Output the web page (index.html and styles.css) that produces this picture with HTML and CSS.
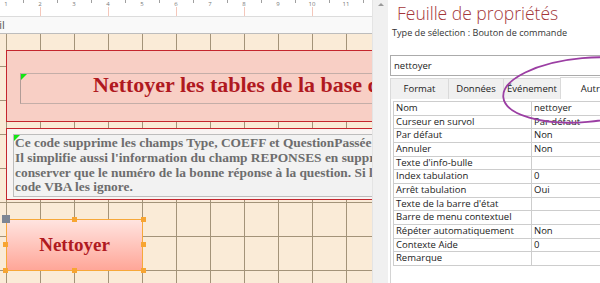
FILE: index.html
```html
<!DOCTYPE html>
<html lang="fr">
<head>
<meta charset="UTF-8">
<meta name="viewport" content="width=device-width, initial-scale=1.0">
<title>Formulaire - Mode Création</title>
<link rel="stylesheet" href="styles.css">
</head>
<body>

<div class="designer">
    <div class="ruler">
        <div class="ruler-marks">
            <span>1</span><span class="major">2</span><span>3</span><span class="major">4</span><span>5</span><span class="major">6</span><span>7</span><span class="major">8</span><span>9</span><span class="major">10</span><span>11</span>
        </div>
    </div>
    <div class="section-bar"><span>Détail</span></div>
    <div class="canvas">
        <div class="title-box">
            <div class="title-label"><i class="corner"></i>Nettoyer les tables de la base de données</div>
        </div>
        <div class="note-box">
            <div class="note-label"><i class="corner"></i>Ce code supprime les champs Type, COEFF et QuestionPassée<br>Il simplifie aussi l'information du champ REPONSES en supprimant le texte pour ne<br>conserver que le numéro de la bonne réponse à la question. Si les champs manquent, le<br>code VBA les ignore.</div>
        </div>
        <div class="button-ctrl">
            Nettoyer
            <i class="grip"></i>
            <i class="handle h-tc"></i>
            <i class="handle h-tr"></i>
            <i class="handle h-ml"></i>
            <i class="handle h-mr"></i>
            <i class="handle h-bl"></i>
            <i class="handle h-bc"></i>
            <i class="handle h-br"></i>
        </div>
    </div>
</div>

<div class="scrollbar"><span class="arrow"></span></div>

<div class="panel">
    <h1 class="panel-title">Feuille de propriétés</h1>
    <div class="selection-type">Type de sélection : Bouton de commande</div>
    <div class="combo">nettoyer</div>
    <div class="tabs">
        <span class="tab tab-format">Format</span>
        <span class="tab tab-data">Données</span>
        <span class="tab tab-event">Événement</span>
        <span class="tab tab-other active">Autre</span>
    </div>
    <div class="sheet">
        <div class="props">
            <div class="k">Nom</div><div class="v">nettoyer</div>
            <div class="k">Curseur en survol</div><div class="v">Par défaut</div>
            <div class="k">Par défaut</div><div class="v">Non</div>
            <div class="k">Annuler</div><div class="v">Non</div>
            <div class="k">Texte d'info-bulle</div><div class="v"></div>
            <div class="k">Index tabulation</div><div class="v">0</div>
            <div class="k">Arrêt tabulation</div><div class="v">Oui</div>
            <div class="k">Texte de la barre d'état</div><div class="v"></div>
            <div class="k">Barre de menu contextuel</div><div class="v"></div>
            <div class="k">Répéter automatiquement</div><div class="v">Non</div>
            <div class="k">Contexte Aide</div><div class="v">0</div>
            <div class="k">Remarque</div><div class="v"></div>
        </div>
    </div>
    <svg class="callout" width="110" height="90" viewBox="0 0 110 90">
        <ellipse cx="85" cy="40" rx="82" ry="32" transform="rotate(-5 85 40)" fill="none" stroke="#9b3ea3" stroke-width="1.8"/>
    </svg>
</div>

</body>
</html>
```

FILE: styles.css
```css
* {
    box-sizing: border-box;
}
body {
    margin: 0;
    width: 600px;
    height: 283px;
    overflow: hidden;
    display: flex;
    background: #fff;
    font-family: "Open Sans", "Noto Sans", sans-serif;
}

/* form designer */
.designer {
    width: 372px;
    flex: none;
    display: flex;
    flex-direction: column;
    overflow: hidden;
}
.ruler {
    height: 17px;
    flex: none;
    border-bottom: 1px solid #dcdcdc;
    background-color: #fff;
    background-image: linear-gradient(90deg, #a0a0a0 1px, transparent 1px);
    background-size: 34px 3px;
    background-position: 23px 0;
    background-repeat: repeat-x;
    overflow: hidden;
}
.ruler-marks {
    display: flex;
    margin-left: -11px;
}
.ruler-marks span {
    flex: none;
    width: 34px;
    height: 16px;
    padding-top: 1px;
    text-align: center;
    font-size: 6px;
    line-height: 7px;
    color: #777;
}
.ruler-marks .major {
    background: linear-gradient(#f4c7bb, #f4c7bb) no-repeat 17px 7px / 1px 9px;
}
.section-bar {
    height: 17px;
    flex: none;
    background: #f9f9f9;
    border-bottom: 1px solid #bdbdbd;
    font-size: 11px;
    line-height: 16px;
    color: #555;
    white-space: nowrap;
    overflow: hidden;
}
.section-bar span {
    margin-left: -25px;
}
.canvas {
    flex: 1;
    padding-top: 16px;
    background-color: #faebd7;
    background-image:
        linear-gradient(90deg, #a39379 1px, transparent 1px),
        linear-gradient(#a39379 1px, transparent 1px);
    background-size: 34px 34px;
    background-position: 6px 0, 0 32px;
}
.title-box {
    margin-left: 6px;
    width: 380px;
    height: 72px;
    padding: 22px 0 0 13px;
    border: 1px solid #c4262e;
    background: #f8cfc5;
}
.title-label {
    position: relative;
    height: 31px;
    padding-left: 72px;
    border: 1px solid #c4aea8;
    border-left-color: #b19c97;
    font-family: "Liberation Serif", serif;
    font-weight: bold;
    font-size: 22px;
    line-height: 22px;
    color: #b0191f;
    white-space: nowrap;
    overflow: hidden;
}
.corner {
    position: absolute;
    left: 0;
    top: 0;
    width: 0;
    height: 0;
    border-top: 6px solid #14e614;
    border-right: 6px solid transparent;
}
.note-box {
    margin: 6px 0 0 6px;
    width: 380px;
    height: 72px;
    padding: 5px 0 0 6px;
    border: 1px solid #c4262e;
    background: #f8f4f3;
}
.note-label {
    position: relative;
    height: 63px;
    padding: 1px 0 0 1px;
    border: 1px solid #bdbdbd;
    background: #f2f2f2;
    font-family: "Liberation Serif", serif;
    font-weight: bold;
    font-size: 13.4px;
    line-height: 14.8px;
    color: #6d6d6d;
    white-space: nowrap;
    overflow: hidden;
}
.button-ctrl {
    position: relative;
    margin: 19px 0 0 6px;
    width: 137px;
    height: 52px;
    display: flex;
    align-items: center;
    justify-content: center;
    border: 1px solid #f6a83a;
    background: linear-gradient(#ffe4e0, #ffa698);
    font-family: "Liberation Serif", serif;
    font-weight: bold;
    font-size: 19px;
    color: #b01a21;
}
.grip {
    position: absolute;
    left: -5px;
    top: -5px;
    width: 8px;
    height: 8px;
    background: #7d8694;
}
.handle {
    position: absolute;
    width: 5px;
    height: 5px;
    background: #f7a532;
}
.h-tc { left: 65px; top: -3px; }
.h-tr { right: -4px; top: -3px; }
.h-ml { left: -4px; top: 22px; }
.h-mr { right: -4px; top: 22px; }
.h-bl { left: -4px; bottom: -3px; }
.h-bc { left: 65px; bottom: -3px; }
.h-br { right: -4px; bottom: -3px; }

.scrollbar {
    width: 16px;
    flex: none;
    padding: 3px 0 0 5px;
    background: #f0f0f0;
    border-left: 1px solid #e4e4e4;
}
.arrow {
    display: block;
    width: 0;
    height: 0;
    border-left: 3px solid transparent;
    border-right: 3px solid transparent;
    border-bottom: 3px solid #9a9a9a;
}

/* property sheet */
.panel {
    position: relative;
    flex: 1;
    display: flex;
    flex-direction: column;
    overflow: hidden;
    white-space: nowrap;
    color: #1a1a1a;
}
.panel-title {
    margin: 0;
    height: 24px;
    padding: 2px 0 0 9px;
    font-weight: 300;
    font-size: 17.5px;
    line-height: 22px;
    color: #a4373a;
}
.selection-type {
    margin-top: 3px;
    padding-left: 4px;
    font-size: 9.1px;
    line-height: 12px;
    color: #333;
}
.combo {
    margin: 16px 0 0 2px;
    width: 240px;
    height: 21px;
    padding-left: 3px;
    border: 1px solid #ababab;
    font-size: 9.5px;
    line-height: 19px;
}
.tabs {
    display: flex;
    align-items: flex-end;
    margin: 2px 0 0 2px;
    height: 21px;
}
.tab {
    flex: none;
    height: 21px;
    margin-right: -1px;
    border: 1px solid #dadada;
    border-bottom: none;
    background: #f0f0f0;
    text-align: center;
    font-size: 9.5px;
    line-height: 19px;
    color: #222;
}
.tab-format { width: 59px; }
.tab-data { width: 56px; }
.tab-event { width: 58px; }
.tab-other { width: 66px; }
.tab.active {
    height: 22px;
    background: #fff;
    line-height: 21px;
}
.sheet {
    flex: 1;
    margin-left: 2px;
    padding: 2px 0 0 2px;
    border-left: 1px solid #d4d4d4;
}
.props {
    width: 260px;
    display: grid;
    grid-template-columns: 138px 1fr;
    grid-auto-rows: 13.66px;
    border-top: 1px solid #cdcdcd;
    border-left: 1px solid #cdcdcd;
}
.k, .v {
    padding-left: 2px;
    border-right: 1px solid #cdcdcd;
    border-bottom: 1px solid #cdcdcd;
    font-size: 9.5px;
    line-height: 12.6px;
    overflow: hidden;
}
.callout {
    position: absolute;
    left: 112px;
    top: 50px;
}
```
